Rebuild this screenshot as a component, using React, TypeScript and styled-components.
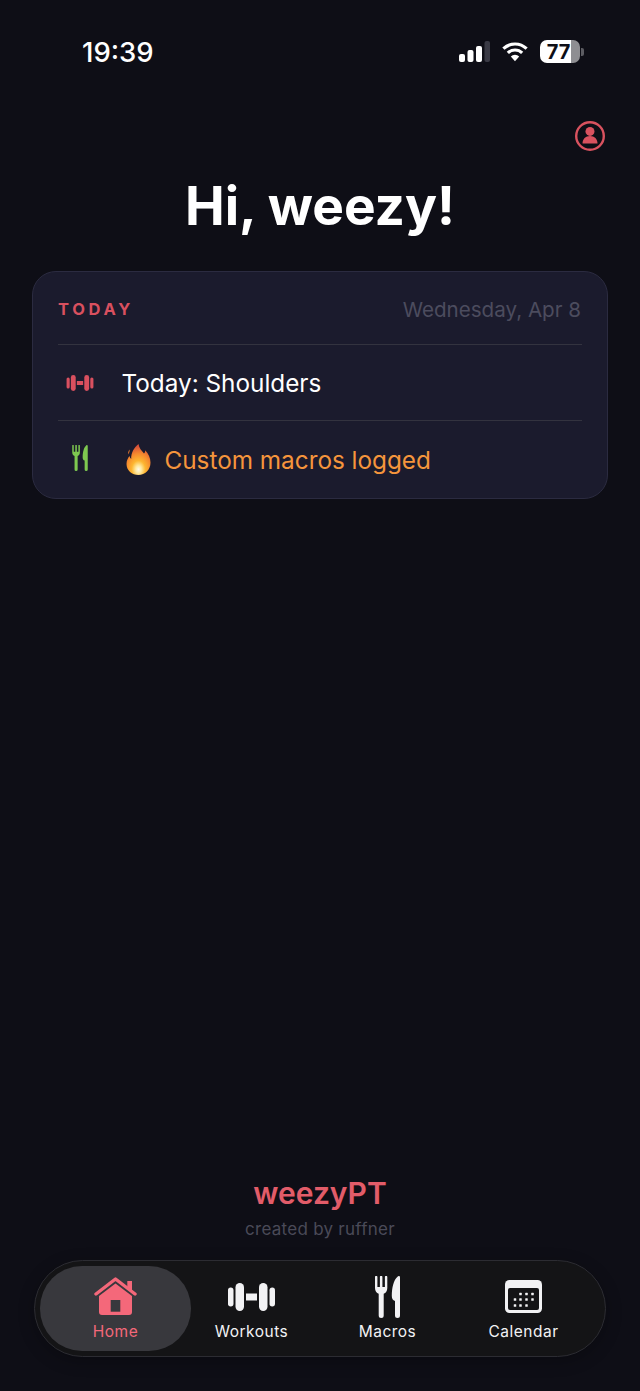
import React from "react";
import styled, { createGlobalStyle } from "styled-components";

const GlobalStyle = createGlobalStyle`
  html, body {
    margin: 0;
    padding: 0;
    background: #0e0e16;
  }
  * { box-sizing: border-box; }
`;

const Page = styled.div`
  width: 640px;
  height: 1391px;
  display: flex;
  flex-direction: column;
  background: #0e0e16;
  color: #fff;
  font-family: Inter, "Liberation Sans", sans-serif;
  overflow: hidden;
`;

const StatusBar = styled.div`
  height: 104px;
  padding: 34px 56px 0 82px;
  display: flex;
  justify-content: space-between;
  align-items: flex-start;
`;

const Clock = styled.div`
  font-size: 27.5px;
  line-height: 36px;
  font-weight: 500;
`;

const StatusIcons = styled.div`
  display: flex;
  align-items: center;
  gap: 12px;
  padding-top: 6px;
`;

const Battery = styled.div`
  width: 40px;
  height: 23px;
  border-radius: 7px;
  overflow: hidden;
  background: linear-gradient(90deg, #fff 0 77%, #8e8e92 77% 100%);
  display: flex;
  align-items: center;
  justify-content: center;
  color: #0e0e16;
  font-size: 20px;
  font-weight: 700;
  padding-right: 3px;
`;

const BatteryWrap = styled.div`
  display: flex;
  align-items: center;
  gap: 1px;
`;

const BatteryNub = styled.div`
  width: 3px;
  height: 8px;
  border-radius: 0 2px 2px 0;
  background: #5c5c62;
`;

const ProfileRow = styled.div`
  display: flex;
  justify-content: flex-end;
  padding-right: 34px;
  margin-top: 16px;
`;

const Greeting = styled.h1`
  margin: 19px 0 0;
  text-align: center;
  font-size: 53.2px;
  line-height: 70px;
  font-weight: 700;
`;

const Card = styled.section`
  margin: 30px 32px 0;
  height: 228px;
  border-radius: 24px;
  background: #1b1b2d;
  border: 1px solid #2b2b40;
  padding: 0 25px;
  display: flex;
  flex-direction: column;
`;

const CardHeader = styled.div`
  height: 73px;
  padding-top: 2px;
  display: flex;
  justify-content: space-between;
  align-items: center;
  border-bottom: 1px solid #33333f;
`;

const CardTitle = styled.span`
  font-size: 16.5px;
  font-weight: 700;
  letter-spacing: 3.7px;
  color: #d9505f;
`;

const CardDate = styled.span`
  font-size: 20.6px;
  color: #4c4c5e;
  padding-right: 1px;
`;

const Row = styled.div<{ $last?: boolean }>`
  height: ${(p) => (p.$last ? 77 : 76)}px;
  display: flex;
  align-items: center;
  border-bottom: ${(p) => (p.$last ? "none" : "1px solid #33333f")};
`;

const RowIcon = styled.div<{ $lift?: boolean }>`
  width: 44px;
  margin-right: 19.5px;
  padding-bottom: ${(p) => (p.$lift ? 4 : 0)}px;
  display: flex;
  align-items: center;
  justify-content: center;
`;

const RowText = styled.span<{ $accent?: boolean }>`
  font-size: 24.3px;
  color: ${(p) => (p.$accent ? "#f5953c" : "#fff")};
  display: flex;
  align-items: center;
`;

const Flame = styled.svg`
  margin: 0 13.5px 0 4.5px;
`;

const Spacer = styled.div`
  flex: 1;
`;

const Brand = styled.div`
  text-align: center;
  font-size: 30px;
  line-height: 36px;
  font-weight: 600;
  color: #e25c69;
`;

const Credit = styled.div`
  text-align: center;
  margin-top: 7px;
  font-size: 17px;
  line-height: 22px;
  letter-spacing: 0.27px;
  color: #4a4a58;
`;

const Nav = styled.nav`
  margin: 20px 34px 34px;
  height: 97px;
  border-radius: 49px;
  background: #141416;
  border: 1px solid #2c2c32;
  padding: 5px 0 5px 5px;
  display: grid;
  grid-template-columns: 151px 121px 151px 121px;
  box-shadow: 0 4px 16px rgba(0, 0, 0, 0.25);
`;

const NavItem = styled.div<{ $active?: boolean }>`
  border-radius: 42px;
  background: ${(p) => (p.$active ? "#38383d" : "transparent")};
  color: ${(p) => (p.$active ? "#f4687a" : "#f2f2f4")};
  display: flex;
  flex-direction: column;
  align-items: center;
  font-size: 15.5px;
  font-weight: 400;
  letter-spacing: 0.5px;
`;

const NavIcon = styled.div`
  height: 47px;
  margin-top: 7px;
  display: flex;
  align-items: center;
  justify-content: center;
`;

const NavLabel = styled.span`
  margin-top: 2px;
  line-height: 20px;
`;

const Dumbbell = ({ w, h, color }: { w: number; h: number; color: string }) => (
  <svg width={w} height={h} viewBox="0 0 47 28" fill={color}>
    <rect x="0" y="4.500" width="5.500" height="19" rx="2.700" />
    <rect x="7.500" y="0" width="8.500" height="28" rx="4.200" />
    <rect x="18" y="10.500" width="11" height="7" />
    <rect x="31" y="0" width="8.500" height="28" rx="4.200" />
    <rect x="41.500" y="4.500" width="5.500" height="19" rx="2.700" />
  </svg>
);

const Cutlery = ({ w, h, color }: { w: number; h: number; color: string }) => (
  <svg width={w} height={h} viewBox="0 0 25 42" fill={color}>
    <path d="M0 1a1.200 1.200 0 0 1 2.400 0V11H4.900V1a1.250 1.250 0 0 1 2.500 0V11H9.900V1a1.200 1.200 0 0 1 2.400 0V12c0 3-1.500 4.800-3.600 5.800V39.500a2.500 2.500 0 0 1-5 0V17.800C1.500 16.800 0 15 0 12z" />
    <path d="M25 1.500c0-1.500-1.500-1.800-2.500-0.800C18.500 4 16.800 12 16.800 20c0 2.500 1 4.500 3.200 5V39.500a2.500 2.500 0 0 0 5 0z" />
  </svg>
);

const calendarDots = [
  [15.5, 14], [21.5, 14], [27.5, 14],
  [10, 19.5], [15.5, 19.5], [21.5, 19.5], [27.5, 19.5],
  [10, 25.5], [15.5, 25.5], [21.5, 25.5]
];

const App = () => (
  <Page>
    <GlobalStyle />
    <StatusBar>
      <Clock>19:39</Clock>
      <StatusIcons>
        <svg width="31" height="21" viewBox="0 0 31 21">
          <rect x="0" y="13" width="6" height="8" rx="2" fill="#fff" />
          <rect x="8.500" y="9" width="6" height="12" rx="2" fill="#fff" />
          <rect x="17" y="5" width="6" height="16" rx="2" fill="#fff" />
          <rect x="25.500" y="0" width="5.500" height="21" rx="2" fill="#3a3a45" />
        </svg>
        <svg width="26" height="21" viewBox="0 0 28 21" fill="none" stroke="#fff" strokeWidth="3.400">
          <path d="M1.500 7.500a18 18 0 0 1 25 0" />
          <path d="M6.300 12a11 11 0 0 1 15.400 0" />
          <path d="M14 21l-4.500-5a6.200 6.200 0 0 1 9 0z" fill="#fff" stroke="none" />
        </svg>
        <BatteryWrap>
          <Battery>77</Battery>
          <BatteryNub />
        </BatteryWrap>
      </StatusIcons>
    </StatusBar>

    <ProfileRow>
      <svg width="32" height="32" viewBox="0 0 32 32">
        <circle cx="16" cy="16" r="13.800" fill="none" stroke="#d9525f" strokeWidth="2.400" />
        <circle cx="16" cy="11.400" r="4.500" fill="#d9525f" />
        <path d="M8.500 23.500c0-4.500 3-7.500 7.500-7.500s7.500 3 7.500 7.500z" fill="#d9525f" />
      </svg>
    </ProfileRow>

    <Greeting>Hi, weezy!</Greeting>

    <Card>
      <CardHeader>
        <CardTitle>TODAY</CardTitle>
        <CardDate>Wednesday, Apr 8</CardDate>
      </CardHeader>
      <Row>
        <RowIcon>
          <Dumbbell w={28} h={16} color="#d9505f" />
        </RowIcon>
        <RowText>Today: Shoulders</RowText>
      </Row>
      <Row $last>
        <RowIcon $lift>
          <Cutlery w={16} h={26} color="#7ec850" />
        </RowIcon>
        <RowText $accent>
          <Flame width="25" height="31" viewBox="0 0 25 31">
            <defs>
              <radialGradient id="flameFill" cx="0.5" cy="0.82" r="0.75">
                <stop offset="0" stopColor="#fff8e8" />
                <stop offset="0.16" stopColor="#ffe9a0" />
                <stop offset="0.38" stopColor="#fdb631" />
                <stop offset="0.68" stopColor="#f58a2e" />
                <stop offset="1" stopColor="#d8503a" />
              </radialGradient>
            </defs>
            <path d="M12.500 0c0.500 4 3 6.500 5.500 9.500 1-1 1.300-2 1.200-3.200 3.300 3.500 5.300 8 5.300 12.200C24.500 26 19 31 12.500 31S0.500 26.500 0.500 20c0-3.500 1.500-6 3-8 0.300 1.300 0.800 2.200 1.700 3C5 9 8 3.500 12.500 0z" fill="url(#flameFill)" />
            <path d="M3.500 5.500c0.500 2-0.500 3.500-1.500 5 0-2 0.500-3.700 1.500-5z" fill="#e8772e" />
          </Flame>
          Custom macros logged
        </RowText>
      </Row>
    </Card>

    <Spacer />

    <Brand>weezyPT</Brand>
    <Credit>created by ruffner</Credit>

    <Nav>
      <NavItem $active>
        <NavIcon>
          <svg width="44" height="40" viewBox="0 0 44 40">
            <path d="M5 19L21.500 6.500 38 19V35a3 3 0 0 1-3 3H8a3 3 0 0 1-3-3z" fill="#f4687a" />
            <rect x="16.700" y="23" width="9.600" height="11.700" fill="#38383d" />
            <rect x="33.300" y="4" width="4.700" height="9" fill="#f4687a" />
            <path d="M2 17L21.500 2 41 17" fill="none" stroke="#f4687a" strokeWidth="3.400" strokeLinecap="round" strokeLinejoin="round" />
          </svg>
        </NavIcon>
        <NavLabel>Home</NavLabel>
      </NavItem>
      <NavItem>
        <NavIcon>
          <Dumbbell w={47} h={28} color="#f2f2f4" />
        </NavIcon>
        <NavLabel>Workouts</NavLabel>
      </NavItem>
      <NavItem>
        <NavIcon>
          <Cutlery w={25} h={42} color="#f2f2f4" />
        </NavIcon>
        <NavLabel>Macros</NavLabel>
      </NavItem>
      <NavItem>
        <NavIcon>
          <svg width="37" height="33" viewBox="0 0 37 33">
            <rect x="0" y="0" width="37" height="33" rx="4.500" fill="#f2f2f4" />
            <rect x="3" y="8" width="31" height="22" rx="2" fill="#141416" />
            <g fill="#f2f2f4">
              {calendarDots.map(([x, y]) => (
                <rect key={`${x}-${y}`} x={x - 1.25} y={y - 1.25} width="2.500" height="2.500" rx="0.500" />
              ))}
            </g>
          </svg>
        </NavIcon>
        <NavLabel>Calendar</NavLabel>
      </NavItem>
    </Nav>
  </Page>
);

export default App;
